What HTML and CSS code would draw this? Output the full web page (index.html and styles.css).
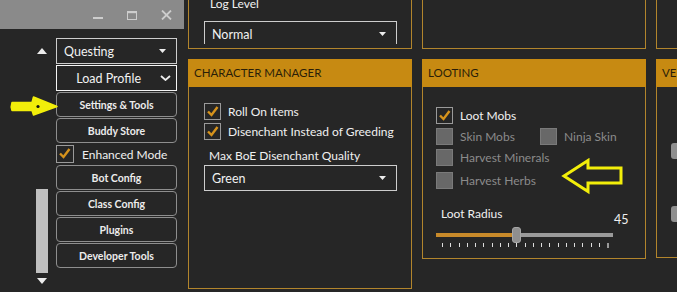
FILE: index.html
```html
<!DOCTYPE html>
<html>
<head>
<meta charset="utf-8">
<link rel="stylesheet" href="styles.css">
</head>
<body>
<div class="app">
  <aside class="sidebar">
    <div class="titlebar">
      <div class="tb-btn"><svg width="10" height="10"><rect x="0" y="7" width="10" height="2" fill="#cdcdcd"/></svg></div>
      <div class="tb-btn"><svg width="10" height="9"><rect x="0.5" y="0.5" width="9" height="8" fill="none" stroke="#cdcdcd"/><rect x="0" y="0" width="10" height="2.2" fill="#cdcdcd"/></svg></div>
      <div class="tb-btn"><svg width="11" height="10"><path d="M1 0.5 L10 9.5 M10 0.5 L1 9.5" stroke="#cdcdcd" stroke-width="1.8"/></svg></div>
    </div>
    <div class="side-body">
      <div class="scroll">
        <svg class="arrow-up" width="10" height="6"><path d="M0 6 L5 0 L10 6 Z" fill="#ececec"/></svg>
        <div class="track"><div class="thumb"></div></div>
        <svg class="arrow-down" width="10" height="6"><path d="M0 0 L5 6 L10 0 Z" fill="#ececec"/></svg>
      </div>
      <nav class="menu">
        <div class="combo combo-side"><span>Questing</span><svg width="7" height="4"><path d="M0 0 L7 0 L3.5 4 Z" fill="#ececec"/></svg></div>
        <div class="combo load"><span>Load Profile</span><svg width="11" height="6"><path d="M1 1 L5.5 5 L10 1" fill="none" stroke="#ececec" stroke-width="1.8"/></svg></div>
        <div class="btn">Settings &amp; Tools</div>
        <div class="btn">Buddy Store</div>
        <label class="check-row side-check"><span class="cb"><svg width="17" height="17"><path d="M4 8.5 L7.5 12 L13.5 4" fill="none" stroke="#d6931c" stroke-width="2.4"/></svg></span><span>Enhanced Mode</span></label>
        <div class="btn">Bot Config</div>
        <div class="btn">Class Config</div>
        <div class="btn">Plugins</div>
        <div class="btn">Developer Tools</div>
      </nav>
    </div>
  </aside>

  <main class="content">
    <section class="panel top-panel">
      <div class="clip">
        <div class="field-label log-label">Log Level</div>
        <div class="combo wide"><span>Normal</span><svg width="7" height="4"><path d="M0 0 L7 0 L3.5 4 Z" fill="#ececec"/></svg></div>
      </div>
    </section>
    <section class="panel top-panel"></section>
    <section class="panel top-panel"></section>

    <section class="panel char">
      <header class="panel-head">CHARACTER MANAGER</header>
      <div class="panel-body char-body">
        <div class="check-row"><span class="cb"><svg width="17" height="17"><path d="M4 8.5 L7.5 12 L13.5 4" fill="none" stroke="#d6931c" stroke-width="2.4"/></svg></span><span>Roll On Items</span></div>
        <div class="check-row"><span class="cb"><svg width="17" height="17"><path d="M4 8.5 L7.5 12 L13.5 4" fill="none" stroke="#d6931c" stroke-width="2.4"/></svg></span><span>Disenchant Instead of Greeding</span></div>
        <div class="field-label quality-label">Max BoE Disenchant Quality</div>
        <div class="combo wide"><span>Green</span><svg width="7" height="4"><path d="M0 0 L7 0 L3.5 4 Z" fill="#ececec"/></svg></div>
      </div>
    </section>

    <section class="panel loot">
      <header class="panel-head">LOOTING</header>
      <div class="panel-body loot-body">
        <div class="check-row"><span class="cb"><svg width="17" height="17"><path d="M4 8.5 L7.5 12 L13.5 4" fill="none" stroke="#d6931c" stroke-width="2.4"/></svg></span><span>Loot Mobs</span></div>
        <div class="pair">
          <div class="check-row off skin"><span class="cb"></span><span>Skin Mobs</span></div>
          <div class="check-row off"><span class="cb"></span><span>Ninja Skin</span></div>
        </div>
        <div class="check-row off"><span class="cb"></span><span>Harvest Minerals</span></div>
        <div class="check-row off herbs"><span class="cb"></span><span>Harvest Herbs</span></div>
        <div class="radius">
          <div class="field-label radius-label">Loot Radius</div>
          <div class="slider">
            <div class="rail"><div class="fill"></div><div class="rest"></div><div class="knob"></div></div>
            <div class="ticks"><i></i><i></i><i></i><i></i><i></i><i></i><i></i><i></i><i></i><i></i><i></i><i></i><i></i><i></i><i></i><i></i><i></i><i></i><i></i><i></i><i class="last"></i></div>
          </div>
          <div class="value">45</div>
        </div>
      </div>
    </section>

    <section class="panel vend">
      <header class="panel-head">VE</header>
      <div class="panel-body vend-body">
        <div class="stub"></div>
        <div class="stub second"></div>
      </div>
    </section>
  </main>
</div>

<svg class="mark mark-left" width="60" height="26" viewBox="0 0 60 26">
  <path d="M12 8.5 Q10.5 12.5 12 16.5 L32 16.5 L33.5 21 L57 12.5 L33.5 3 L32 8.5 Z" fill="#f2ee0a" stroke="#f2ee0a" stroke-width="1.5" stroke-linejoin="round"/>
  <circle cx="38" cy="12.5" r="1.6" fill="#111"/>
</svg>
<svg class="mark mark-right" width="64" height="38" viewBox="0 0 64 38">
  <path d="M3 18 L27 2.5 L27 10 L60 10 L60 25 L27 25 L27 33.5 Z" fill="none" stroke="#f2ee0a" stroke-width="3" stroke-linejoin="miter"/>
</svg>
</body>
</html>
```

FILE: styles.css
```css
* { box-sizing: border-box; margin: 0; padding: 0; }

html, body {
  width: 677px;
  height: 292px;
  overflow: hidden;
  background: #262626;
}

body {
  position: relative;
  font-family: Lato, "Liberation Sans", sans-serif;
  color: #f0f0f0;
  font-size: 12px;
}

.app {
  display: flex;
  height: 292px;
}

/* ---------- sidebar ---------- */
.sidebar {
  width: 184px;
  flex: none;
  display: flex;
  flex-direction: column;
}

.titlebar {
  height: 29px;
  background: #8a8a8a;
  display: flex;
  justify-content: flex-end;
  padding-right: 1px;
}

.tb-btn {
  width: 34px;
  height: 29px;
  display: flex;
  align-items: center;
  justify-content: center;
  padding-top: 1px;
}

.side-body {
  flex: 1;
  display: flex;
}

.scroll {
  width: 56px;
  padding: 19px 2px 8px 30px;
  display: flex;
  flex-direction: column;
  align-items: center;
}

.track {
  flex: 1;
  width: 12px;
  display: flex;
  flex-direction: column;
  justify-content: flex-end;
}

.thumb {
  height: 84px;
  background: #c0c0c0;
}

.arrow-down { margin-top: 5px; }

.menu {
  width: 121px;
  padding-top: 9px;
  display: flex;
  flex-direction: column;
  gap: 1px;
}

.combo {
  height: 26px;
  border: 1px solid #cdcdcd;
  display: flex;
  align-items: center;
  justify-content: space-between;
  padding: 0 10px 0 7px;
  font-size: 12.5px;
  color: #f2f2f2;
}

.combo.load {
  border-color: #f4f4f4;
  justify-content: flex-end;
  gap: 19px;
  padding-right: 5px;
}

.btn {
  height: 25px;
  border: 1px solid #8e8e8e;
  border-radius: 4px;
  display: flex;
  align-items: center;
  justify-content: center;
  font-weight: 700;
  font-size: 10.5px;
  color: #ececec;
}

.check-row {
  display: flex;
  align-items: center;
  gap: 7px;
  height: 20px;
  font-size: 12px;
}

.cb {
  width: 17px;
  height: 17px;
  border: 1px solid #9a9a9a;
  background: #262626;
  flex: none;
  display: flex;
}

.cb svg { margin: -1px; }

.side-check { gap: 8px; font-size: 12px; }
.side-check .cb { width: 18px; height: 18px; }

/* ---------- content ---------- */
.content {
  flex: 1;
  overflow: hidden;
  padding-left: 4px;
  display: grid;
  grid-template-columns: 224px 224px 224px;
  grid-template-rows: 49px auto;
  column-gap: 10px;
  row-gap: 10px;
  align-items: start;
}

.panel {
  border: 1px solid #b2852c;
}

.top-panel {
  height: 49px;
  border-top: none;
}

.clip {
  height: 44px;
  overflow: hidden;
  padding-left: 15px;
}

.field-label {
  font-size: 12px;
  color: #f0f0f0;
  padding-left: 6px;
  line-height: 16px;
}

.log-label { margin-top: -4px; margin-bottom: 9px; }

.wide { width: 193px; }

.panel-head {
  height: 28px;
  margin: -1px -1px 0;
  background: #c78a12;
  color: #2a1e08;
  font-size: 11.5px;
  line-height: 28px;
  padding-left: 6px;
  white-space: nowrap;
  overflow: hidden;
}

.char { height: 230px; }
.loot { height: 200px; }
.vend { height: 199px; }

.char-body {
  padding: 14px 0 0 15px;
  display: flex;
  flex-direction: column;
}

.quality-label {
  padding-left: 5px;
  margin-top: 7px;
  margin-bottom: 1px;
}

.loot-body {
  padding: 18px 0 0 13px;
  display: flex;
  flex-direction: column;
  gap: 1px;
}

.loot-body .check-row { height: 20px; }
.loot-body .check-row.herbs { margin-top: 2px; }

.pair {
  display: flex;
}

.skin { width: 104px; }

.off { color: #8b8b8b; }
.off .cb {
  background: #686868;
  border-color: #7a7a7a;
}

.radius {
  display: grid;
  grid-template-columns: 177px auto;
  column-gap: 1px;
  margin-top: 15px;
}

.radius-label {
  grid-column: 1 / -1;
  padding-left: 5px;
}

.slider {
  margin-top: 5px;
  height: 22px;
}

.rail {
  position: relative;
  height: 16px;
  display: flex;
  align-items: center;
}

.fill { width: 77px; height: 4px; background: #c88a2a; }
.rest { flex: 1; height: 4px; background: #9a9a9a; }

.knob {
  position: absolute;
  left: 76px;
  top: 0;
  width: 9px;
  height: 16px;
  border-radius: 3px;
  background: #8f8f8f;
  border: 1px solid #a6a6a6;
}

.ticks {
  display: flex;
  justify-content: space-between;
  align-items: flex-start;
  padding: 0 4px 0 6px;
}

.ticks i {
  width: 1px;
  height: 4px;
  background: #dedede;
}

.ticks i.last {
  width: 2px;
  height: 5px;
  background: #9a9a9a;
}

.value {
  font-size: 12.5px;
  margin-top: -10px;
}

.vend-body {
  padding: 56px 0 0 14px;
  display: flex;
  flex-direction: column;
}

.stub {
  width: 17px;
  height: 16px;
  border-radius: 3px;
  background: #8f8f8f;
}

.stub.second { margin-top: 47px; }

/* ---------- annotation arrows ---------- */
.mark {
  position: absolute;
}

.mark-left { left: 0; top: 94px; }
.mark-right { left: 561px; top: 158px; }
```
